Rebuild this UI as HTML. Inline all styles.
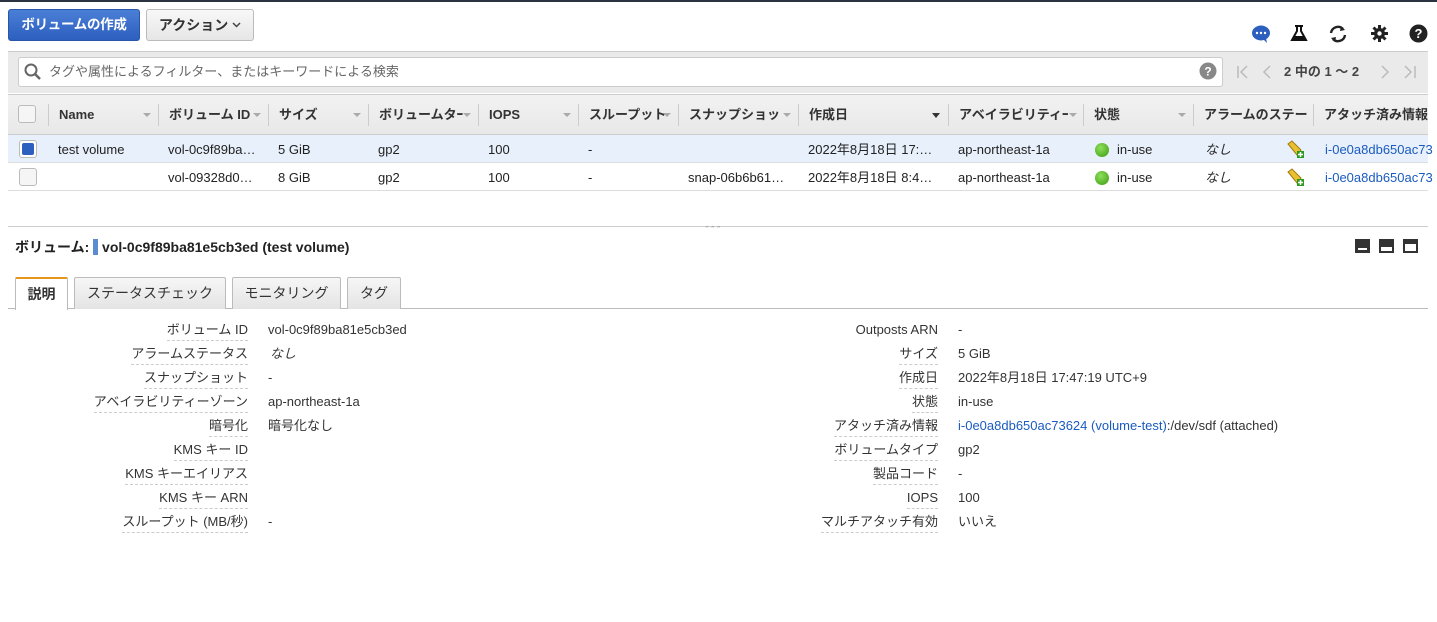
<!DOCTYPE html>
<html><head><meta charset="utf-8"><style>
*{box-sizing:border-box;margin:0;padding:0}
body{width:1437px;height:622px;overflow:hidden;background:#fff;font-family:"Liberation Sans","Noto Sans CJK JP",sans-serif;font-size:13px;color:#222;position:relative}
.a{position:absolute;white-space:nowrap}
.btn{position:absolute;height:32px;border-radius:3px;font-weight:bold;font-size:14px;line-height:30px;white-space:nowrap;text-align:center}
.hd{position:absolute;top:95px;height:40px;line-height:40px;font-weight:bold;font-size:13px;color:#333;white-space:nowrap}
.sep{position:absolute;top:104px;width:1px;height:22px;background:#ccc}
.ar{position:absolute;top:113px;width:0;height:0;border-left:4px solid transparent;border-right:4px solid transparent;border-top:4px solid #aaa}
.cell{position:absolute;line-height:28px;font-size:13px;white-space:nowrap}
.lab{position:absolute;text-align:right;font-size:13px;color:#333;border-bottom:1px dashed #ccc;padding-bottom:2px;line-height:17px;white-space:nowrap}
.val{position:absolute;font-size:13px;color:#333;line-height:17px;white-space:nowrap}
.tab{position:absolute;top:277px;height:32px;border:1px solid #bbb;border-bottom:none;background:linear-gradient(#f6f6f6,#e4e4e4);font-size:14px;line-height:30px;text-align:center;color:#333;border-radius:2px 2px 0 0;white-space:nowrap}
.cb{position:absolute;width:18px;height:18px;border:1px solid #bbb;border-radius:3px;background:#f5f5f5}
</style></head><body>
<div class="a" style="left:0;top:0;width:1437px;height:2px;background:#2b3240"></div>
<div class="btn" style="left:8px;top:9px;width:132px;background:linear-gradient(#4a7fd6,#2d5fbf);border:1px solid #2a56a8;color:#fff;font-size:13.5px;letter-spacing:-0.3px">ボリュームの作成</div>
<div class="btn" style="left:146px;top:9px;width:108px;background:linear-gradient(#f8f8f8,#e6e6e6);border:1px solid #bbb;color:#333">アクション <svg width="9" height="6" viewBox="0 0 9 6" style="vertical-align:2px"><path d="M1 1l3.5 3.5L8 1" fill="none" stroke="#444" stroke-width="1.5"/></svg></div>
<!-- top icons -->
<svg class="a" style="left:1251px;top:24px" width="20" height="20" viewBox="0 0 20 20"><ellipse cx="10" cy="9" rx="9" ry="7.5" fill="#2d5fbf"/><path d="M12 15 L16 19 L15 14Z" fill="#2d5fbf"/><circle cx="6" cy="9" r="1.2" fill="#fff"/><circle cx="10" cy="9" r="1.2" fill="#fff"/><circle cx="14" cy="9" r="1.2" fill="#fff"/></svg>
<svg class="a" style="left:1290px;top:24px" width="18" height="18" viewBox="0 0 18 18"><path d="M5 2h8M7 2v5L2 16h14L11 7V2" fill="none" stroke="#111" stroke-width="2"/><path d="M4 12h10l2 4H2z" fill="#111"/></svg>
<svg class="a" style="left:1328px;top:24px" width="20" height="20" viewBox="0 0 20 20"><path d="M3 9a7 7 0 0 1 12-4" fill="none" stroke="#222" stroke-width="2.4"/><path d="M17 11a7 7 0 0 1-12 4" fill="none" stroke="#222" stroke-width="2.4"/><path d="M13 2l4 4-5 1z M7 18l-4-4 5-1z" fill="#222"/></svg>
<svg class="a" style="left:1371px;top:25px" width="17" height="17" viewBox="0 0 17 17"><circle cx="8.5" cy="8.5" r="5.5" fill="#222"/><g stroke="#222" stroke-width="3"><path d="M8.5 0v17M0 8.5h17M2.5 2.5l12 12M14.5 2.5l-12 12"/></g><circle cx="8.5" cy="8.5" r="2.2" fill="#fff"/></svg>
<svg class="a" style="left:1409px;top:24px" width="19" height="19" viewBox="0 0 19 19"><circle cx="9.5" cy="9.5" r="9" fill="#222"/><text x="9.5" y="14" font-size="13" font-weight="bold" fill="#fff" text-anchor="middle" font-family="Liberation Sans">?</text></svg>
<!-- filter bar -->
<div class="a" style="left:8px;top:51px;width:1420px;height:42px;background:#eaeaea;border-top:1px solid #ccc"></div>
<div class="a" style="left:18px;top:57px;width:1205px;height:30px;background:#fff;border:1px solid #ccc;border-radius:3px"></div>
<svg class="a" style="left:24px;top:63px" width="18" height="18" viewBox="0 0 18 18"><circle cx="7" cy="7" r="5.5" fill="none" stroke="#666" stroke-width="2"/><path d="M11 11l5 5" stroke="#666" stroke-width="2.5"/></svg>
<div class="a" style="left:49px;top:63px;font-size:13px;color:#666;line-height:17px">タグや属性によるフィルター、またはキーワードによる検索</div>
<svg class="a" style="left:1199px;top:62px" width="18" height="18" viewBox="0 0 18 18"><circle cx="9" cy="9" r="8.5" fill="#888"/><text x="9" y="13.5" font-size="12" font-weight="bold" fill="#fff" text-anchor="middle" font-family="Liberation Sans">?</text></svg>
<svg class="a" style="left:1236px;top:64px" width="40" height="16" viewBox="0 0 40 16"><path d="M2 2v12M11 2L5 8l6 6M34 2L28 8l6 6" fill="none" stroke="#bbb" stroke-width="1.5"/></svg>
<div class="a" style="left:1284px;top:63px;font-size:13px;font-weight:bold;color:#444;line-height:17px">2 中の 1 〜 2</div>
<svg class="a" style="left:1380px;top:64px" width="40" height="16" viewBox="0 0 40 16"><path d="M2 2l6 6-6 6M25 2l6 6-6 6M35 2v12" fill="none" stroke="#bbb" stroke-width="1.5"/></svg>
<!-- header -->
<div class="a" style="left:8px;top:94px;width:1420px;height:41px;background:linear-gradient(#f2f2f2,#e8e8e8);border-top:1px solid #ccc;border-bottom:1px solid #ccc"></div>
<div class="cb" style="left:18px;top:105px"></div>
<div class="sep" style="left:48px"></div><div class="hd" style="left:59px">Name</div><div class="ar" style="left:143px"></div>
<div class="sep" style="left:158px"></div><div class="hd" style="left:169px">ボリューム ID</div><div class="ar" style="left:253px"></div>
<div class="sep" style="left:268px"></div><div class="hd" style="left:279px">サイズ</div><div class="ar" style="left:353px"></div>
<div class="sep" style="left:368px"></div><div class="hd" style="left:379px">ボリュームタｰ</div><div class="ar" style="left:463px"></div>
<div class="sep" style="left:478px"></div><div class="hd" style="left:489px">IOPS</div><div class="ar" style="left:563px"></div>
<div class="sep" style="left:578px"></div><div class="hd" style="left:589px">スループット</div><div class="ar" style="left:663px"></div>
<div class="sep" style="left:678px"></div><div class="hd" style="left:689px">スナップショッ</div><div class="ar" style="left:783px"></div>
<div class="sep" style="left:798px"></div><div class="hd" style="left:809px">作成日</div><div class="a" style="left:932px;top:113px;border-left:4px solid transparent;border-right:4px solid transparent;border-top:5px solid #333"></div>
<div class="sep" style="left:948px"></div><div class="hd" style="left:959px">アベイラビリティｰ</div><div class="ar" style="left:1069px"></div>
<div class="sep" style="left:1083px"></div><div class="hd" style="left:1094px">状態</div><div class="ar" style="left:1178px"></div>
<div class="sep" style="left:1193px"></div><div class="hd" style="left:1204px">アラームのステー</div>
<div class="sep" style="left:1313px"></div><div class="hd" style="left:1324px">アタッチ済み情報</div>
<!-- rows -->
<div class="a" style="left:8px;top:135px;width:1420px;height:28px;background:#e8f0fb;border-bottom:1px solid #ddd"></div>
<div class="a" style="left:8px;top:163px;width:1420px;height:28px;background:#fff;border-bottom:1px solid #ddd"></div>
<div class="cb" style="left:19px;top:140px;background:#fff"></div><div class="a" style="left:22px;top:143px;width:12px;height:12px;background:#2d5fbf;border-radius:2px"></div>
<div class="cb" style="left:19px;top:168px"></div>
<div class="cell" style="left:58px;top:136px">test volume</div>
<div class="cell" style="left:168px;top:136px">vol-0c9f89ba…</div>
<div class="cell" style="left:278px;top:136px">5 GiB</div>
<div class="cell" style="left:378px;top:136px">gp2</div>
<div class="cell" style="left:488px;top:136px">100</div>
<div class="cell" style="left:588px;top:136px">-</div>
<div class="cell" style="left:808px;top:136px">2022年8月18日 17:…</div>
<div class="cell" style="left:958px;top:136px">ap-northeast-1a</div>
<div class="a" style="left:1095px;top:143px;width:14px;height:14px;border-radius:50%;background:radial-gradient(circle at 40% 35%,#8fe05a,#3a9a10)"></div>
<div class="cell" style="left:1117px;top:136px">in-use</div>
<div class="cell" style="left:1205px;top:136px;font-style:italic">なし</div>
<div class="cell" style="left:1325px;top:136px;color:#1a5bbf">i-0e0a8db650ac73</div>
<div class="cell" style="left:168px;top:164px">vol-09328d0…</div>
<div class="cell" style="left:278px;top:164px">8 GiB</div>
<div class="cell" style="left:378px;top:164px">gp2</div>
<div class="cell" style="left:488px;top:164px">100</div>
<div class="cell" style="left:588px;top:164px">-</div>
<div class="cell" style="left:688px;top:164px">snap-06b6b61…</div>
<div class="cell" style="left:808px;top:164px">2022年8月18日 8:4…</div>
<div class="cell" style="left:958px;top:164px">ap-northeast-1a</div>
<div class="a" style="left:1095px;top:171px;width:14px;height:14px;border-radius:50%;background:radial-gradient(circle at 40% 35%,#8fe05a,#3a9a10)"></div>
<div class="cell" style="left:1117px;top:164px">in-use</div>
<div class="cell" style="left:1205px;top:164px;font-style:italic">なし</div>
<div class="cell" style="left:1325px;top:164px;color:#1a5bbf">i-0e0a8db650ac73</div>
<svg class="a" style="left:1286px;top:140px" width="20" height="20" viewBox="0 0 20 20"><path d="M2 4l4-3 9 9-4 5z" fill="#e8c030" stroke="#a07810"/><rect x="11" y="11" width="7" height="7" fill="#2a9a20"/><path d="M14.5 12v5M12 14.5h5" stroke="#fff" stroke-width="1.5"/></svg>
<svg class="a" style="left:1286px;top:168px" width="20" height="20" viewBox="0 0 20 20"><path d="M2 4l4-3 9 9-4 5z" fill="#e8c030" stroke="#a07810"/><rect x="11" y="11" width="7" height="7" fill="#2a9a20"/><path d="M14.5 12v5M12 14.5h5" stroke="#fff" stroke-width="1.5"/></svg>
<!-- splitter -->
<div class="a" style="left:8px;top:226px;width:1420px;height:1px;background:#ccc"></div>
<div class="a" style="left:704px;top:226px;font-size:7px;color:#999;line-height:8px">⌃⌃⌃</div>
<div class="a" style="left:15px;top:238px;font-size:14px;font-weight:bold;color:#222;line-height:18px">ボリューム: <span style="display:inline-block;width:5px;height:16px;background:#5b8bd0;vertical-align:-3px"></span> vol-0c9f89ba81e5cb3ed (test volume)</div>
<div class="a" style="left:1355px;top:239px;width:15px;height:14px;background:#333"><div style="position:absolute;left:3px;bottom:3px;width:9px;height:2px;background:#fff"></div></div>
<div class="a" style="left:1379px;top:239px;width:15px;height:14px;background:#333"><div style="position:absolute;left:2px;bottom:2px;width:11px;height:4px;background:#fff"></div></div>
<div class="a" style="left:1403px;top:239px;width:15px;height:14px;background:#333"><div style="position:absolute;left:2px;bottom:2px;width:11px;height:7px;background:#fff"></div></div>
<!-- tabs -->
<div class="a" style="left:8px;top:308px;width:1420px;height:1px;background:#bbb"></div>
<div class="tab" style="left:15px;width:53px;background:#fff;border-top:2px solid #e8951c;height:33px;font-weight:bold">説明</div>
<div class="tab" style="left:74px;width:152px">ステータスチェック</div>
<div class="tab" style="left:232px;width:109px">モニタリング</div>
<div class="tab" style="left:347px;width:54px">タグ</div>
<!-- details left -->
<div class="lab" style="right:1189px;top:321px">ボリューム ID</div><div class="val" style="left:268px;top:321px">vol-0c9f89ba81e5cb3ed</div>
<div class="lab" style="right:1189px;top:345px">アラームステータス</div><div class="val" style="left:270px;top:345px;font-style:italic">なし</div>
<div class="lab" style="right:1189px;top:369px">スナップショット</div><div class="val" style="left:268px;top:369px">-</div>
<div class="lab" style="right:1189px;top:393px">アベイラビリティーゾーン</div><div class="val" style="left:268px;top:393px">ap-northeast-1a</div>
<div class="lab" style="right:1189px;top:417px">暗号化</div><div class="val" style="left:268px;top:417px">暗号化なし</div>
<div class="lab" style="right:1189px;top:441px">KMS キー ID</div>
<div class="lab" style="right:1189px;top:465px">KMS キーエイリアス</div>
<div class="lab" style="right:1189px;top:489px">KMS キー ARN</div>
<div class="lab" style="right:1189px;top:513px">スループット (MB/秒)</div><div class="val" style="left:268px;top:513px">-</div>
<!-- details right -->
<div class="lab" style="right:499px;top:321px;border:none">Outposts ARN</div><div class="val" style="left:958px;top:321px">-</div>
<div class="lab" style="right:499px;top:345px">サイズ</div><div class="val" style="left:958px;top:345px">5 GiB</div>
<div class="lab" style="right:499px;top:369px">作成日</div><div class="val" style="left:958px;top:369px">2022年8月18日 17:47:19 UTC+9</div>
<div class="lab" style="right:499px;top:393px">状態</div><div class="val" style="left:958px;top:393px">in-use</div>
<div class="lab" style="right:499px;top:417px">アタッチ済み情報</div><div class="val" style="left:958px;top:417px"><span style="color:#1a5bbf">i-0e0a8db650ac73624 (volume-test)</span>:/dev/sdf (attached)</div>
<div class="lab" style="right:499px;top:441px">ボリュームタイプ</div><div class="val" style="left:958px;top:441px">gp2</div>
<div class="lab" style="right:499px;top:465px">製品コード</div><div class="val" style="left:958px;top:465px">-</div>
<div class="lab" style="right:499px;top:489px">IOPS</div><div class="val" style="left:958px;top:489px">100</div>
<div class="lab" style="right:499px;top:513px">マルチアタッチ有効</div><div class="val" style="left:958px;top:513px">いいえ</div>
</body></html>
